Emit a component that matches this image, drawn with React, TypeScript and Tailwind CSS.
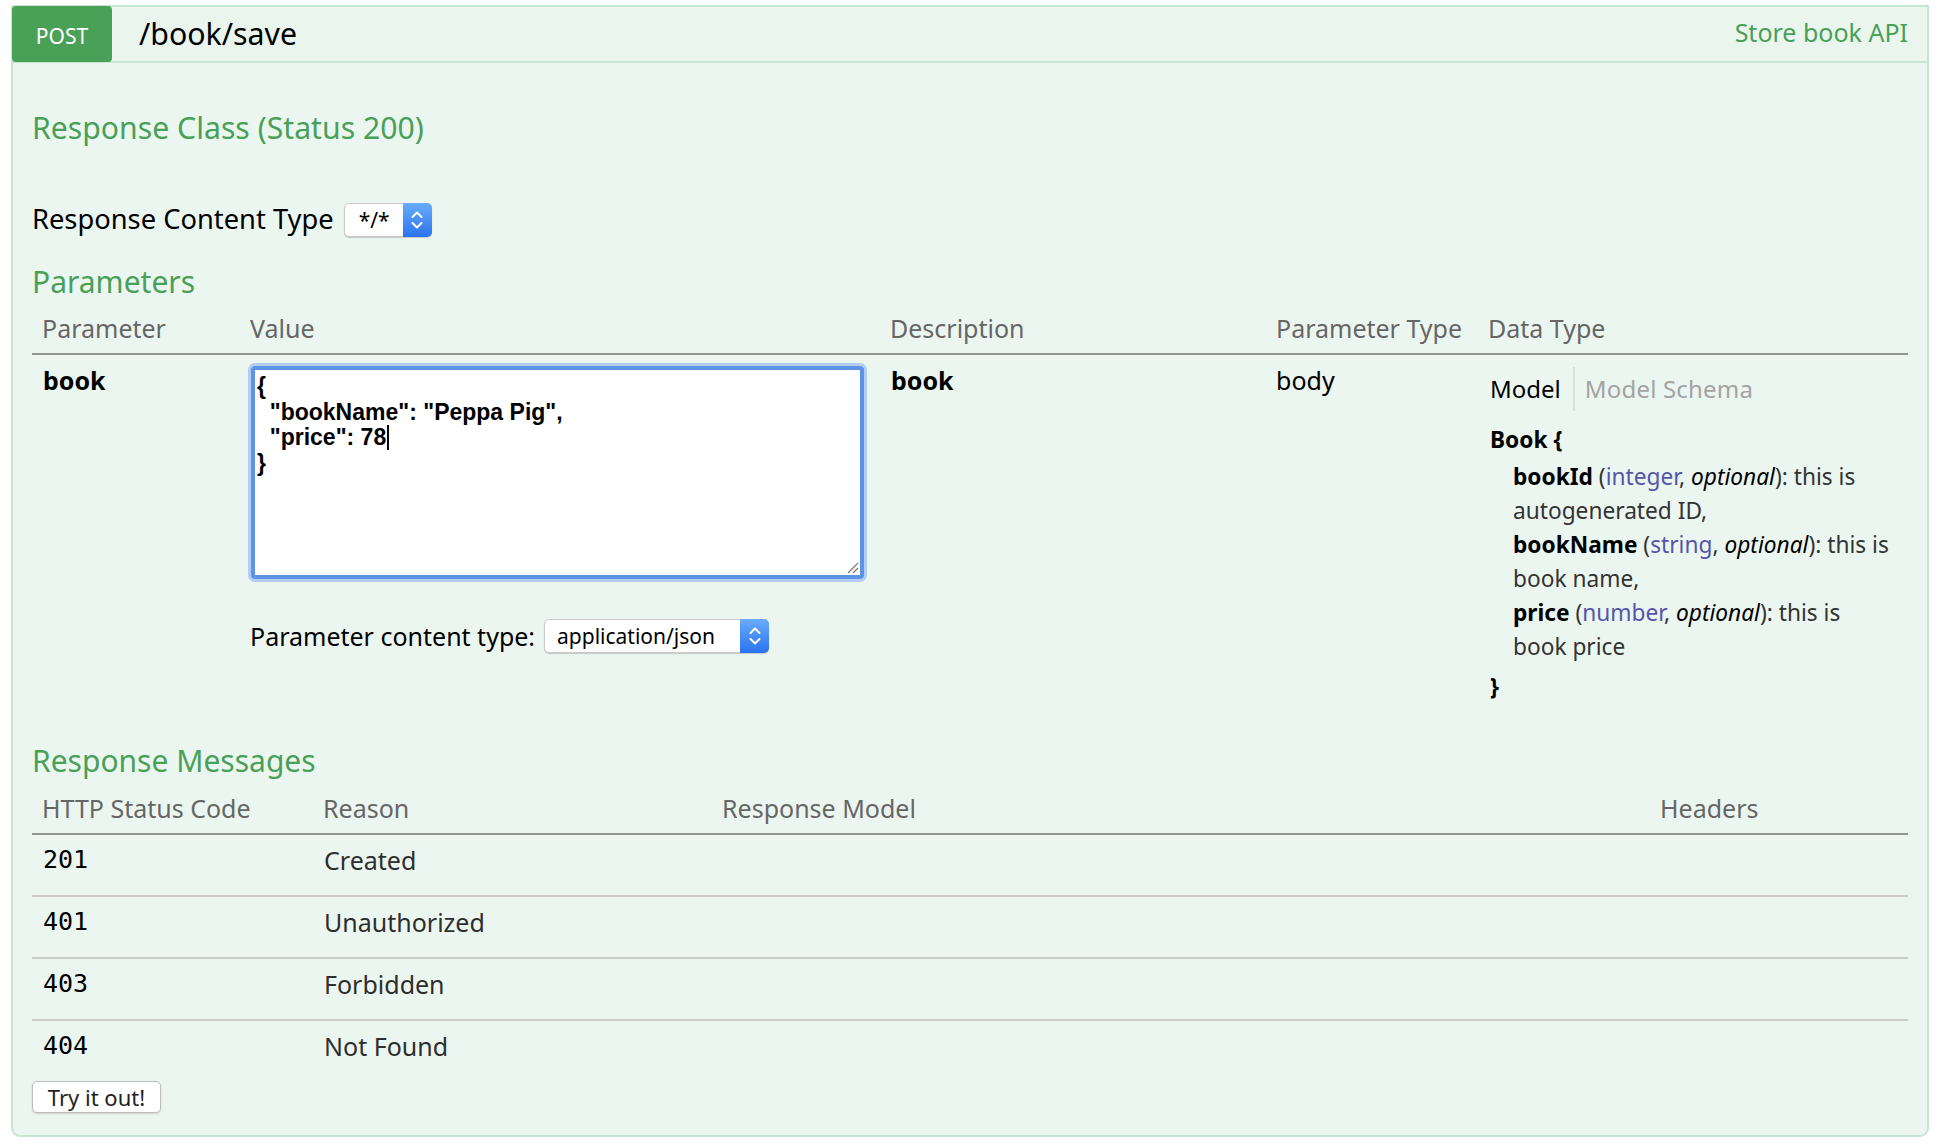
import React from "react";

function Stepper() {
  return (
    <div className="-my-px -mr-px flex w-[29px] items-center justify-center rounded-r-[5px] bg-linear-to-b from-[#6aabfc] to-[#2a73ee]">
      <svg width="14" height="24" viewBox="0 0 14 24" fill="none">
        <path d="M2.5 9 L7 4.5 L11.5 9" stroke="white" strokeWidth="2" strokeLinecap="round" strokeLinejoin="round" />
        <path d="M2.5 15 L7 19.5 L11.5 15" stroke="white" strokeWidth="2" strokeLinecap="round" strokeLinejoin="round" />
      </svg>
    </div>
  );
}

function Select({ label, wide }: { label: string; wide?: boolean }) {
  return (
    <div
      className={
        wide
          ? "flex h-[34px] w-[225px] items-stretch rounded-[5px] border border-[#cbcbcb] bg-white shadow-[0_1px_1px_rgba(0,0,0,0.18)]"
          : "flex h-[34px] w-[88px] items-stretch rounded-[5px] border border-[#cbcbcb] bg-white shadow-[0_1px_1px_rgba(0,0,0,0.18)]"
      }
    >
      <div
        className={
          wide
            ? "flex flex-1 items-center pl-[12px] text-[21px] leading-[26px] text-black"
            : "flex flex-1 items-center pl-[14px] text-[21px] leading-[26px] text-black"
        }
      >
        {label}
      </div>
      <Stepper />
    </div>
  );
}

function TextArea() {
  return (
    <div className="h-[219px] w-[619px] rounded-[7px] border-[3px] border-[#b3cdf3]">
      <div className="relative h-full w-full rounded-[4px] border-[4px] border-[#5b94e5] bg-white">
        <div className="whitespace-pre pl-[2px] pt-[4px] font-['Liberation_Sans',Arial,sans-serif] text-[23px] font-bold leading-[25.7px] text-black">
          <div>{"{"}</div>
          <div>{'  "bookName": "Peppa Pig",'}</div>
          <div>
            {'  "price": 78'}
            <span className="ml-px inline-block h-[25px] w-[1.5px] bg-black align-[-5px]"></span>
          </div>
          <div>{"}"}</div>
        </div>
        <svg className="absolute bottom-[1px] right-[1px]" width="13" height="13" viewBox="0 0 13 13">
          <path d="M2 12 L12 2" stroke="#7a7a7a" strokeWidth="1.2" />
          <path d="M7 12 L12 7" stroke="#7a7a7a" strokeWidth="1.2" />
        </svg>
      </div>
    </div>
  );
}

function ModelView() {
  return (
    <div className="pl-[12px]">
      <div className="mt-[12px] flex h-[44px] items-center text-[24px] leading-[30px]">
        <span className="pr-[12px] text-black">Model</span>
        <span className="h-full w-[2px] bg-[#dcdedd]"></span>
        <span className="pl-[10px] tracking-[0.2px] text-[#a3a3a3]">Model Schema</span>
      </div>
      <div className="mt-[12px] text-[22.7px] leading-[34px] text-[#333]">
        <div className="font-bold text-black">Book {"{"}</div>
        <div className="mt-[3px] pl-[23px]">
          <div className="whitespace-nowrap">
            <b className="text-black">bookId</b> (<span className="text-[#5555aa]">integer</span>,{" "}
            <i className="text-black">optional</i>): this is
          </div>
          <div className="whitespace-nowrap">autogenerated ID,</div>
          <div className="whitespace-nowrap">
            <b className="text-black">bookName</b> (<span className="text-[#5555aa]">string</span>,{" "}
            <i className="text-black">optional</i>): this is
          </div>
          <div className="whitespace-nowrap">book name,</div>
          <div className="whitespace-nowrap">
            <b className="text-black">price</b> (<span className="text-[#5555aa]">number</span>,{" "}
            <i className="text-black">optional</i>): this is
          </div>
          <div className="whitespace-nowrap">book price</div>
        </div>
        <div className="mt-[6px] font-bold text-black">{"}"}</div>
      </div>
    </div>
  );
}

const responses = [
  { code: "201", reason: "Created" },
  { code: "401", reason: "Unauthorized" },
  { code: "403", reason: "Forbidden" },
  { code: "404", reason: "Not Found" },
];

export default function App() {
  return (
    <div className="min-h-screen bg-white pl-[11px] pt-[5px] font-['Noto_Sans',sans-serif]">
      <div className="w-[1918px]">
        {/* Heading */}
        <div className="flex h-[58px] items-center border-2 border-[#c6e6d2] bg-[#e9f5ed]">
          <div className="-my-px -ml-px flex h-[56px] w-[100px] items-center justify-center rounded-[4px] bg-[#49a057] pt-[4px] text-[21px] leading-[26px] text-white">
            POST
          </div>
          <div className="ml-[27px] text-[30.3px] leading-[36px] text-black">/book/save</div>
          <div className="mb-[4px] ml-auto mr-[19px] text-[25px] leading-[30px] text-[#49a057]">Store book API</div>
        </div>

        {/* Content */}
        <div className="flex flex-col rounded-b-[9px] border-2 border-t-0 border-[#c6e6d2] bg-[#ecf6f0] px-[19px] pb-[22px] pt-[47px]">
          <h4 className="text-[30.2px] leading-[36px] text-[#49a057]">Response Class (Status 200)</h4>

          <div className="mt-[57px] flex h-[34px] items-center">
            <span className="mb-[3px] text-[27.3px] leading-[30px] text-black">Response Content Type</span>
            <div className="ml-[10px]">
              <Select label="*/*" />
            </div>
          </div>

          <h4 className="mt-[27px] text-[30px] leading-[36px] text-[#49a057]">Parameters</h4>

          <div className="mt-[13px] grid grid-cols-[208px_640px_386px_212px_1fr] border-b-2 border-[#939393] pb-[10px] text-[25px] leading-[30px] text-[#666]">
            <div className="pl-[10px]">Parameter</div>
            <div className="pl-[10px]">Value</div>
            <div className="pl-[10px]">Description</div>
            <div className="pl-[10px]">Parameter Type</div>
            <div className="pl-[10px]">Data Type</div>
          </div>

          <div className="grid grid-cols-[208px_640px_386px_212px_1fr] items-start text-[25px] leading-[30px] text-black">
            <div className="pl-[11px] pt-[10px] font-bold">book</div>
            <div className="pl-[8px] pt-[8px]">
              <TextArea />
              <div className="mt-[37px] flex h-[34px] items-center pl-[2px]">
                <span className="text-[25px] leading-[30px] text-black">Parameter content type:</span>
                <div className="ml-[9px]">
                  <Select label="application/json" wide />
                </div>
              </div>
            </div>
            <div className="pl-[11px] pt-[10px] font-bold">book</div>
            <div className="pl-[10px] pt-[10px]">body</div>
            <ModelView />
          </div>

          <h4 className="mt-[39px] text-[30px] leading-[36px] text-[#49a057]">Response Messages</h4>

          <div className="mt-[14px] grid grid-cols-[281px_399px_938px_1fr] border-b-2 border-[#939393] pb-[10px] text-[25px] leading-[30px] text-[#666]">
            <div className="pl-[10px]">HTTP Status Code</div>
            <div className="pl-[10px]">Reason</div>
            <div className="pl-[10px]">Response Model</div>
            <div className="pl-[10px]">Headers</div>
          </div>

          {responses.map((r, i) => (
            <div
              key={r.code}
              className={
                i < responses.length - 1
                  ? "grid grid-cols-[281px_399px_938px_1fr] border-b-2 border-[#cbcbcb] pb-[20px] pt-[10px] leading-[30px]"
                  : "grid grid-cols-[281px_399px_938px_1fr] pb-[20px] pt-[10px] leading-[30px]"
              }
            >
              <div className="pl-[11px] font-['DejaVu_Sans_Mono',monospace] text-[25px] text-black">{r.code}</div>
              <div className="pl-[11px] text-[25px] text-[#2e2e2e]">{r.reason}</div>
              <div></div>
              <div></div>
            </div>
          ))}

          <button className="flex h-[32px] w-[129px] items-center justify-center rounded-[5px] border border-[#bdbdbd] bg-white text-[22px] leading-[28px] text-[#222] shadow-[0_1px_2px_rgba(0,0,0,0.15)]">
            Try it out!
          </button>
        </div>
      </div>
    </div>
  );
}
